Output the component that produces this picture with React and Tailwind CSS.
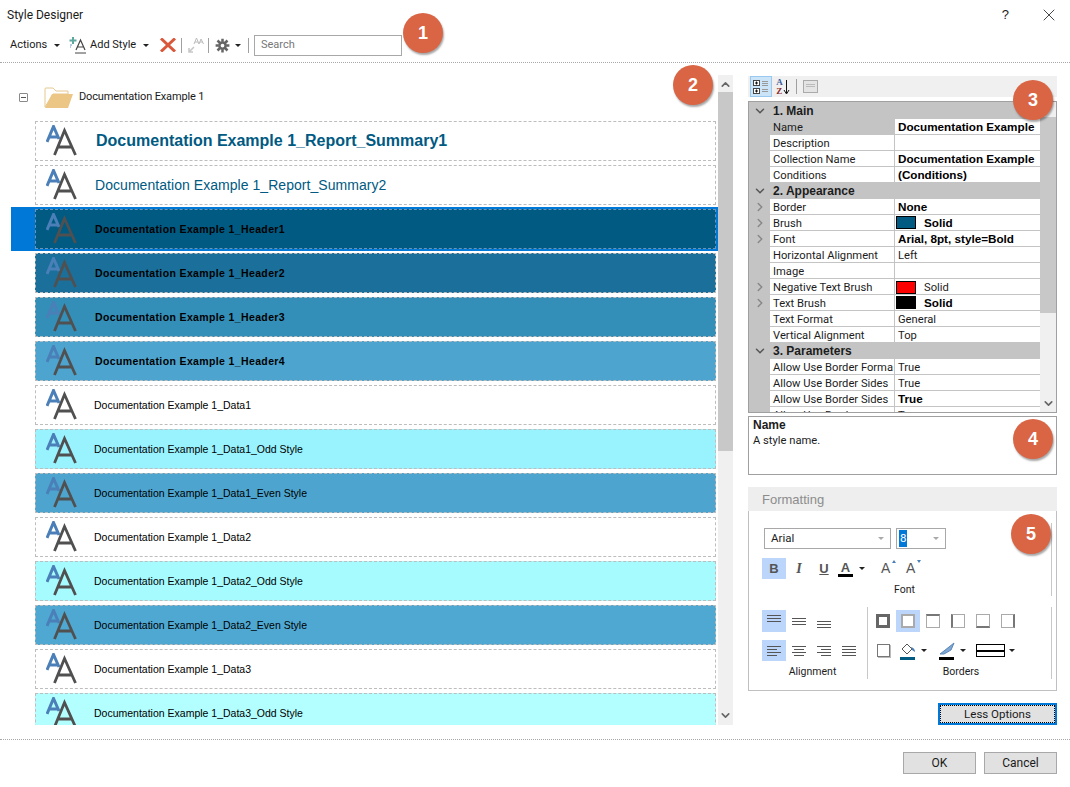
import React from "react";
import { ChevronDown, ChevronRight, ChevronUp, X } from "lucide-react";

const lib = "font-['Liberation_Sans',sans-serif]";
const small = "ml-[17px] text-[10.5px] text-black pt-px";
const head = "ml-[18px] text-[10.5px] font-bold tracking-[0.37px] text-black pt-px";

const rows = [
  { label: "Documentation Example 1_Report_Summary1", cls: "bg-white border-[#bdbdbd]", text: "ml-[19px] text-[16px] font-bold text-[#005a82] pb-px" },
  { label: "Documentation Example 1_Report_Summary2", cls: "bg-white border-[#bdbdbd]", text: "ml-[18px] text-[14px] text-[#005a82] tracking-[0.05px]" },
  { label: "Documentation Example 1_Header1", cls: "bg-[#005a82] border-[#6b96b8]", text: head, selected: true },
  { label: "Documentation Example 1_Header2", cls: "bg-[#1a709b] border-[#bdbdbd]", text: head },
  { label: "Documentation Example 1_Header3", cls: "bg-[#338fb8] border-[#bdbdbd]", text: head },
  { label: "Documentation Example 1_Header4", cls: "bg-[#4da5cf] border-[#bdbdbd]", text: head },
  { label: "Documentation Example 1_Data1", cls: "bg-white border-[#bdbdbd]", text: small },
  { label: "Documentation Example 1_Data1_Odd Style", cls: "bg-[#99f3ff] border-[#bdbdbd]", text: small },
  { label: "Documentation Example 1_Data1_Even Style", cls: "bg-[#4da5cf] border-[#bdbdbd]", text: small },
  { label: "Documentation Example 1_Data2", cls: "bg-white border-[#bdbdbd]", text: small },
  { label: "Documentation Example 1_Data2_Odd Style", cls: "bg-[#a6fbff] border-[#bdbdbd]", text: small },
  { label: "Documentation Example 1_Data2_Even Style", cls: "bg-[#4fa8d2] border-[#bdbdbd]", text: small },
  { label: "Documentation Example 1_Data3", cls: "bg-white border-[#bdbdbd]", text: small },
  { label: "Documentation Example 1_Data3_Odd Style", cls: "bg-[#b3ffff] border-[#bdbdbd]", text: small },
];

const grid = [
  { h: "1. Main" },
  { n: "Name", v: "Documentation Example", b: true },
  { n: "Description", v: "" },
  { n: "Collection Name", v: "Documentation Example", b: true },
  { n: "Conditions", v: "(Conditions)", b: true },
  { h: "2. Appearance" },
  { n: "Border", v: "None", b: true, e: true },
  { n: "Brush", v: "Solid", b: true, e: true, s: "bg-[#005a82]" },
  { n: "Font", v: "Arial, 8pt, style=Bold", b: true, e: true },
  { n: "Horizontal Alignment", v: "Left" },
  { n: "Image", v: "" },
  { n: "Negative Text Brush", v: "Solid", e: true, s: "bg-[#ff0000]" },
  { n: "Text Brush", v: "Solid", b: true, e: true, s: "bg-black" },
  { n: "Text Format", v: "General" },
  { n: "Vertical Alignment", v: "Top" },
  { h: "3. Parameters" },
  { n: "Allow Use Border Forma", v: "True" },
  { n: "Allow Use Border Sides", v: "True" },
  { n: "Allow Use Border Sides", v: "True", b: true },
  { n: "Allow Use Border", v: "True" },
];

function AA() {
  return (
    <svg width="31" height="31" viewBox="0 0 31 31" fill="none" className="shrink-0 -mt-[2px]">
      <path d="M1 17 L7.5 1.5 L13 14 M3.5 12 H12" stroke="#4a7fb8" strokeWidth="3" />
      <path d="M8.5 30 L18.5 5.5 L29.5 30 M12 22 H26" stroke="#505050" strokeWidth="2.8" />
    </svg>
  );
}

function Badge({ n, className }) {
  return (
    <div className={`absolute w-10 h-10 rounded-full bg-[#d96545] text-white font-bold text-[18px] ${lib} flex items-center justify-center shadow-[1px_2px_2px_rgba(0,0,0,0.35)] ${className}`}>
      {n}
    </div>
  );
}

function Caret({ className = "" }) {
  return <span className={`inline-block shrink-0 w-0 h-0 border-x-[3px] border-x-transparent border-t-[3px] border-t-[#222] ${className}`} />;
}

function AlignIcon({ lines }) {
  return (
    <svg width="16" height="14" viewBox="0 0 16 14" stroke="#555" strokeWidth="1">
      {lines.map((l, i) => (
        <line key={i} x1={l[1]} x2={l[2]} y1={l[0] + 0.5} y2={l[0] + 0.5} />
      ))}
    </svg>
  );
}

function BorderIcon({ sides }) {
  return (
    <div className="w-6 h-[22px] flex items-center justify-center">
      <div className={`w-[14px] h-[14px] ${sides}`} />
    </div>
  );
}

function Toolbar() {
  return (
    <div className="h-[24px] mt-[5px] ml-[10px] flex items-center text-[11px] text-[#1a1a1a]">
      <span className="w-[35px] pt-px whitespace-nowrap">Actions</span>
      <Caret className="ml-[9px]" />
      <svg width="17" height="18" viewBox="0 0 17 18" fill="none" className="ml-[9px] shrink-0">
        <path d="M4 1 V8 M0.5 4.5 H7.5" stroke="#5fa8a0" strokeWidth="2" />
        <path d="M1 9 H3 M1 11 H2" stroke="#6a97c4" strokeWidth="1" />
        <path d="M7 14 L11.5 4 L16 14 M8.5 11 H14.5" stroke="#444" strokeWidth="1.2" />
        <path d="M6 17 H17" stroke="#444" strokeWidth="1" />
      </svg>
      <span className="ml-[4px] w-[44px] pt-px whitespace-nowrap">Add Style</span>
      <Caret className="ml-[9px]" />
      <svg width="16" height="14" viewBox="0 0 16 14" className="ml-[11px] shrink-0" fill="none">
        <path d="M1 0.5 L15 13.5 M15 0.5 L1 13.5" stroke="#d9583b" strokeWidth="3" />
      </svg>
      <div className="w-px h-[15px] bg-[#a0a0a0] ml-[5px]" />
      <svg width="16" height="16" viewBox="0 0 16 16" fill="none" className="ml-[6px] shrink-0">
        <path d="M1 15 L6 10 M1 11 V15 H5" stroke="#c8c8c8" strokeWidth="1.6" />
        <path d="M6 7 L8.5 1 L11 7 M11 7 L13 2 L15.5 7 M7 5 H10 M12 5 H15" stroke="#bcbcbc" strokeWidth="1" />
      </svg>
      <div className="w-px h-[15px] bg-[#a0a0a0] ml-[4px]" />
      <svg width="15" height="15" viewBox="0 0 24 24" fill="none" stroke="#666" strokeWidth="4" className="ml-[6px] shrink-0">
        <circle cx="12" cy="12" r="5" />
        <path d="M12 1 V6 M12 18 V23 M1 12 H6 M18 12 H23 M4 4 L8 8 M16 16 L20 20 M20 4 L16 8 M8 16 L4 20" />
      </svg>
      <Caret className="ml-[5px]" />
      <div className="w-px h-[15px] bg-[#a0a0a0] ml-[7px]" />
      <div className="ml-[5px] w-[148px] h-[21px] border border-[#a8a8a8] text-[#777] pl-[6px] flex items-center">Search</div>
    </div>
  );
}

function StyleList() {
  return (
    <div className="w-[723px] ml-[11px] h-[649px] flex relative">
      <div className="w-[707px] overflow-hidden">
        <div className="h-[45px] pb-[2px] flex items-center">
          <div className="w-[9px] h-[9px] ml-[8px] border border-[#8a8a8a] rounded-[1px] flex items-center justify-center">
            <div className="w-[5px] h-px bg-[#555]" />
          </div>
          <svg width="30" height="21" viewBox="0 0 30 21" className="ml-[16px]" fill="none">
            <path d="M1 20 V2 Q1 1 2 1 H9 L12 4 H24 V7 H9 Z" fill="#fff" stroke="#e6c891" />
            <path d="M1 21 L8 7 H29 L24 21 Z" fill="#ecc685" />
          </svg>
          <span className="ml-[5px] text-[11px] tracking-[-0.15px] text-[#1a1a1a] whitespace-nowrap">Documentation Example 1</span>
        </div>
        <div className={`flex flex-col gap-1 ${lib}`}>
          {rows.map((r, i) => (
            <div key={i} className={r.selected ? "bg-[#0078d7] -my-[2px] py-[2px] pr-[2px] h-[44px] pl-[24px]" : "pl-[24px] pr-[2px]"}>
              <div className={`h-10 border border-dashed flex items-center ${r.cls}`}>
                <div className="ml-[10px]"><AA /></div>
                <span className={`whitespace-nowrap ${r.text}`}>{r.label}</span>
              </div>
            </div>
          ))}
        </div>
      </div>
      <div className="w-[15px] h-[650px] -mt-px bg-[#f0f0f0] flex flex-col items-center relative">
        <ChevronUp size={13} strokeWidth={3} className="mt-[3px] mb-px text-[#666]" />
        <div className="w-full h-[359px] bg-[#c8c8c8]" />
        <div className="flex-1" />
        <ChevronDown size={13} strokeWidth={3} className="mb-[3px] text-[#666]" />
      </div>
    </div>
  );
}

function PropGrid() {
  return (
    <div className="h-[312px] mt-[4px] border border-[#a0a0a0] flex overflow-hidden bg-[#c4c4c4]">
      <div className="w-[291px] shrink-0 pt-px overflow-hidden text-[11.2px] text-[#1c1c1c] leading-[15px]">
        {grid.map((g, i) =>
          g.h ? (
            <div key={i} className="h-4 flex items-center bg-[#c4c4c4]">
              <div className="w-[21px] flex justify-center"><ChevronDown size={14} strokeWidth={2.5} className="text-[#555]" /></div>
              <span className={`font-bold pl-[3px] text-[12px] ${lib}`}>{g.h}</span>
            </div>
          ) : (
            <div key={i} className="h-4 flex">
              <div className="w-[21px] flex justify-center items-center">
                {g.e && <ChevronRight size={14} strokeWidth={2.5} className="text-[#888]" />}
              </div>
              <div className={`w-[124px] pl-[3px] pt-px whitespace-nowrap overflow-hidden border-b border-[#c4c4c4] ${i === 1 ? "bg-[#c4c4c4]" : "bg-white"}`}>{g.n}</div>
              <div className={`flex-1 ml-px pl-[3px] bg-white border-b border-[#c4c4c4] flex items-center whitespace-nowrap overflow-hidden ${g.b ? `font-bold text-black text-[11.7px] ${lib}` : "pt-px"}`}>
                {g.s && <span className={`w-5 h-[13px] -ml-[2px] mr-2 border border-black ${g.s}`} />}
                {g.v}
              </div>
            </div>
          )
        )}
      </div>
      <div className="flex-1 bg-[#f0f0f0] flex flex-col items-center">
        <div className="h-[15px] w-full" />
        <div className="w-full h-[196px] bg-[#c8c8c8]" />
        <div className="flex-1" />
        <ChevronDown size={13} strokeWidth={3} className="mb-[2px] text-[#666]" />
      </div>
    </div>
  );
}

function Formatting() {
  return (
    <div className="mt-[12px]">
      <div className={`h-6 pt-px bg-[#eeeeee] pl-[14px] flex items-center text-[13px] text-[#8c8c8c] ${lib}`}>Formatting</div>
      <div className="h-[180px] border border-t-0 border-[#c0c0c0] text-[10.5px] text-[#1c1c1c] flex flex-col pl-[15px] pr-[4px] pt-[12px]">
        <div className="h-[73px] pt-[5px] border-r border-[#c8c8c8]">
          <div className="flex gap-[5px] text-[11.5px]">
            <div className="w-[127px] h-[21px] border border-[#a8a8a8] flex items-center justify-between pl-[6px] pr-[6px]">Arial<Caret className="border-t-[#aaa]" /></div>
            <div className="w-[50px] h-[21px] border border-[#a8a8a8] flex items-center justify-between pl-[2px] pr-[6px]"><span className="bg-[#0078d7] text-white px-px">8</span><Caret className="border-t-[#aaa]" /></div>
          </div>
          <div className={`flex items-center mt-[9px] -ml-[2px] h-[21px] text-[#555] ${lib}`}>
            <div className="w-6 h-[21px] bg-[#bcd6fb] flex items-center justify-center font-bold text-[13px]">B</div>
            <div className="w-6 ml-[1px] text-center italic font-bold font-['Liberation_Serif'] text-[14px]">I</div>
            <div className="w-6 ml-[1px] text-center underline font-bold text-[13px]">U</div>
            <div className="ml-[2px] w-[15px] flex flex-col items-center font-bold text-[13px] leading-[13px]">A<div className="w-[15px] h-[3px] bg-black" /></div>
            <Caret className="ml-[6px]" />
            <div className="ml-[16px] w-[15px] text-[14px] relative">A<span className="absolute top-[2px] right-0 w-0 h-0 border-x-[2px] border-x-transparent border-b-[3px] border-b-[#4a7fb8]" /></div>
            <div className="ml-[10px] w-[15px] text-[14px] relative">A<span className="absolute top-[2px] right-0 w-0 h-0 border-x-[2px] border-x-transparent border-t-[3px] border-t-[#4a7fb8]" /></div>
          </div>
          <div className="text-center pr-[6px] mt-[3px] h-4">Font</div>
        </div>
        <div className="flex mt-[11px] h-[72px] border-r border-[#c8c8c8]">
          <div className="w-[106px] pt-[3px] border-r border-[#c8c8c8] -ml-[2px]">
            <div className="flex h-[22px]">
              <div className="w-6 bg-[#bcd6fb] flex justify-center items-center"><AlignIcon lines={[[1,1,15],[4,1,15],[7,1,15]]} /></div>
              <div className="w-6 ml-px flex justify-center items-center"><AlignIcon lines={[[4,1,15],[7,1,15],[10,1,15]]} /></div>
              <div className="w-6 ml-px flex justify-center items-center"><AlignIcon lines={[[7,1,15],[10,1,15],[13,1,15]]} /></div>
            </div>
            <div className="flex h-[21px] mt-[8px]">
              <div className="w-6 bg-[#bcd6fb] flex justify-center items-center"><AlignIcon lines={[[2,1,15],[5,1,11],[8,1,15],[11,1,11]]} /></div>
              <div className="w-6 ml-px flex justify-center items-center"><AlignIcon lines={[[2,1,15],[5,3,13],[8,1,15],[11,3,13]]} /></div>
              <div className="w-6 ml-px flex justify-center items-center"><AlignIcon lines={[[2,1,15],[5,5,15],[8,1,15],[11,5,15]]} /></div>
              <div className="w-6 ml-px flex justify-center items-center"><AlignIcon lines={[[2,1,15],[5,1,15],[8,1,15],[11,1,15]]} /></div>
            </div>
            <div className="text-center mt-[3px] pr-[4px]">Alignment</div>
          </div>
          <div className="flex-1 pl-[3px] pt-[3px]">
            <div className="flex h-[22px] items-center">
              <BorderIcon sides="border-[3px] border-[#666]" />
              <div className="ml-[1px] w-6 h-[22px] bg-[#bcd6fb] flex items-center justify-center"><div className="w-[14px] h-[14px] border-2 border-[#aaa] bg-white" /></div>
              <div className="ml-[1px]"><BorderIcon sides="border border-[#aaa] border-t-2 border-t-[#777]" /></div>
              <div className="ml-[1px]"><BorderIcon sides="border border-[#aaa] border-l-2 border-l-[#777]" /></div>
              <div className="ml-[1px]"><BorderIcon sides="border border-[#aaa] border-b-2 border-b-[#777]" /></div>
              <div className="ml-[1px]"><BorderIcon sides="border border-[#aaa] border-r-2 border-r-[#777]" /></div>
            </div>
            <div className="flex h-[21px] mt-[8px] items-center">
              <div className="w-6 h-[21px] flex items-center justify-center"><div className="w-[13px] h-[13px] border border-[#777] shadow-[1px_1px_0_#bbb]" /></div>
              <svg width="16" height="18" viewBox="0 0 16 18" className="ml-[5px] shrink-0" fill="none">
                <path d="M2 7 L7 2 L12 7 L7 12 Z" stroke="#555" />
                <path d="M11 5 Q15 6 15 10 L12 8 Z" fill="#4a7fb8" />
                <rect x="0" y="15" width="15" height="3" fill="#005a82" />
              </svg>
              <Caret className="ml-[5px]" />
              <svg width="16" height="18" viewBox="0 0 16 18" className="ml-[12px] shrink-0" fill="none">
                <path d="M1 12 L10 5 L15 1 L12 8 L5 12 Z" fill="#7da7d4" stroke="#5b84b8" />
                <rect x="0" y="15" width="15" height="3" fill="#000" />
              </svg>
              <Caret className="ml-[5px]" />
              <div className="ml-[10px] w-[29px] h-[13px] border border-black flex items-center"><div className="w-full h-[2px] bg-black" /></div>
              <Caret className="ml-[4px]" />
            </div>
            <div className="text-center w-[180px] mt-[3px]">Borders</div>
          </div>
        </div>
      </div>
    </div>
  );
}

export default function App() {
  return (
    <div className="w-[1070px] h-[787px] bg-white relative overflow-hidden font-['Roboto',sans-serif] text-[11.5px]">
      <div className="h-[28px] pt-px flex items-center pl-[7px] text-[#1a1a1a]">
        <span className="flex-1 text-[12px]">Style Designer</span>
        <span className={`text-[13px] mr-[30px] ${lib}`}>?</span>
        <X size={20} strokeWidth={1} className="mr-[11px] text-[#222]" />
      </div>
      <Toolbar />
      <div className="border-t border-dotted border-[#a8a8a8] mt-[5px]" />
      <div className="flex mt-[13px]">
        <StyleList />
        <div className="w-[309px] ml-[14px]">
          <div className="h-[21px] bg-[#f0f0f0] flex items-center pl-[2px]">
            <div className="w-[22px] h-[21px] bg-[#cce4f7] border border-[#99c9ef] flex items-center justify-center">
              <svg width="16" height="16" viewBox="0 0 16 16" fill="none" stroke="#444">
                <rect x="0.5" y="1.5" width="6" height="5" fill="#fff" /><rect x="0.5" y="9.5" width="6" height="5" fill="#fff" />
                <path d="M2 4H5M3.5 2.5V5.5M2 12H5M3.5 10.5V13.5" stroke="#111" />
                <path d="M9 2.5H15M9 4.5H15M9 6.5H15M9 10.5H15M9 12.5H15" stroke="#999" />
              </svg>
            </div>
            <div className="w-[22px] flex items-center justify-center text-[9px] font-bold leading-[9px] font-['Liberation_Serif']">
              <div className="flex flex-col"><span className="text-[#3a5a9c]">A</span><span className="text-[#8c2a2a]">Z</span></div>
              <svg width="7" height="16" viewBox="0 0 7 16" fill="none" stroke="#111"><path d="M3.5 1V14M1 11L3.5 15L6 11" /></svg>
            </div>
            <div className="w-px h-[15px] bg-[#a0a0a0] ml-[2px]" />
            <div className="w-[15px] h-[13px] ml-[6px] border border-[#aaa] bg-[#e4e4e4] flex flex-col gap-px pt-[3px] px-[2px]"><div className="h-px w-full bg-[#bbb]" /><div className="h-px w-full bg-[#bbb]" /></div>
          </div>
          <PropGrid />
          <div className="h-[59px] mt-[3px] border border-[#a0a0a0] px-1 pt-px text-[11.2px] leading-[15px] text-[#1c1c1c]">
            <div className={`font-bold text-[12px] ${lib}`}>Name</div>
            <div>A style name.</div>
          </div>
          <Formatting />
          <div className="flex justify-end mt-[12px]">
            <div className="w-[119px] h-[22px] pt-px bg-[#e1e1e1] border-2 border-[#0078d7] flex items-center justify-center outline outline-1 outline-dotted outline-black -outline-offset-3 text-[#1a1a1a]">Less Options</div>
          </div>
        </div>
      </div>
      <div className="border-t border-dotted border-[#a8a8a8] mt-[14px]" />
      <div className="flex justify-end gap-2 mt-[12px] pr-[13px] text-[12px] text-[#1a1a1a]">
        <div className="w-[73px] h-[22px] bg-[#e1e1e1] border border-[#a8a8a8] flex items-center justify-center">OK</div>
        <div className="w-[73px] h-[22px] bg-[#e1e1e1] border border-[#a8a8a8] flex items-center justify-center">Cancel</div>
      </div>
      <Badge n="1" className="left-[403px] top-[13px]" />
      <Badge n="2" className="left-[673px] top-[65px]" />
      <Badge n="3" className="left-[1013px] top-[80px]" />
      <Badge n="4" className="left-[1013px] top-[419px]" />
      <Badge n="5" className="left-[1011px] top-[514px]" />
    </div>
  );
}
